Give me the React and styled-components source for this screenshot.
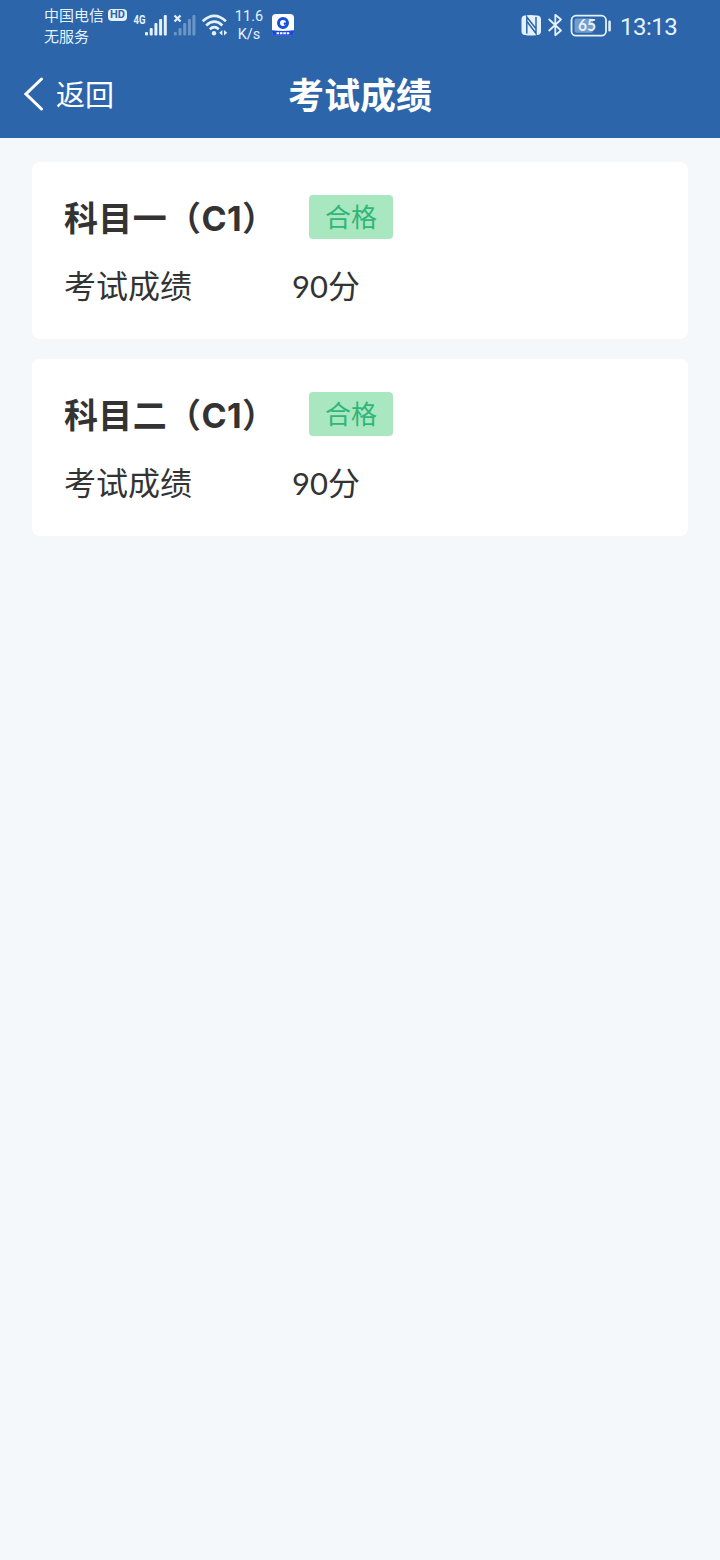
import React from 'react';
import styled, { createGlobalStyle } from 'styled-components';

const GlobalStyle = createGlobalStyle`
  * {
    box-sizing: border-box;
  }

  body {
    margin: 0;
    background-color: #f4f8fa;
    font-family: Lato, 'Noto Sans CJK SC', sans-serif;
    color: #333;
  }
`;

const Page = styled.div`
  width: 720px;
  min-height: 1560px;
  background-color: #f4f8fa;
`;

const Header = styled.header`
  height: 138px;
  background-color: #2c65aa;
  color: #fff;
`;

const StatusBar = styled.div`
  display: flex;
  justify-content: space-between;
  height: 50px;
  padding: 0 43px 0 44px;
  color: #e4f1ff;
`;

const StatusGroup = styled.div`
  display: flex;
  align-items: flex-start;
`;

const Carrier = styled.div`
  width: 86px;
  padding-top: 4px;
  font-family: 'Noto Sans CJK SC', sans-serif;
  font-size: 15px;
  line-height: 21px;
  white-space: nowrap;
`;

const CarrierLine = styled.div`
  display: flex;
  align-items: center;
  gap: 4px;
`;

const HdBadge = styled.span`
  flex: none;
  width: 19px;
  height: 12px;
  margin-top: 1px;
  border-radius: 4px;
  background-color: #e4f1ff;
  color: #2c65aa;
  font-family: Roboto, sans-serif;
  font-size: 11px;
  font-weight: 700;
  line-height: 12px;
  text-align: center;
`;

const NetSpeed = styled.div`
  width: 30px;
  margin-left: 4px;
  padding-top: 8px;
  font-family: Roboto, sans-serif;
  font-size: 14.5px;
  line-height: 18px;
  text-align: center;
`;

const StatusIcon = styled.svg`
  flex: none;
  display: block;
  margin-left: ${(props) => props.$left || 0}px;
`;

const Clock = styled.div`
  width: 57px;
  margin-left: 9px;
  padding-top: 12px;
  font-family: Roboto, sans-serif;
  font-size: 24px;
  line-height: 31px;
  letter-spacing: -0.5px;
  white-space: nowrap;
`;

const NavBar = styled.div`
  display: grid;
  grid-template-columns: 1fr auto 1fr;
  align-items: center;
  height: 88px;
  padding: 0 24px 2px;
  font-family: 'Noto Sans CJK SC', sans-serif;
`;

const BackButton = styled.button`
  display: flex;
  align-items: center;
  gap: 12px;
  padding: 0;
  border: none;
  background: none;
  color: inherit;
  font-family: inherit;
  font-size: 29px;
  line-height: 44px;
`;

const BackArrow = styled.svg`
  margin-top: 2px;
`;

const NavTitle = styled.h1`
  margin: 0;
  font-size: 36px;
  font-weight: 700;
  line-height: 50px;
`;

const CardList = styled.main`
  display: flex;
  flex-direction: column;
  gap: 20px;
  padding: 24px 32px;
`;

const Card = styled.section`
  height: 177px;
  padding: 33px 32px;
  border-radius: 8px;
  background-color: #fff;
`;

const CardHead = styled.div`
  display: flex;
  align-items: center;
  height: 44px;
`;

const SubjectName = styled.h2`
  width: 213px;
  margin: 0 32px 0 0;
  padding-top: 4px;
  font-family: Inter, 'Noto Sans CJK SC', sans-serif;
  font-size: 34px;
  font-weight: 700;
  line-height: 44px;
  letter-spacing: 0.35px;
  white-space: nowrap;
`;

const ResultTag = styled.span`
  width: 84px;
  height: 44px;
  border-radius: 4px;
  background-color: #a9e7c0;
  color: #2fb678;
  font-size: 26px;
  line-height: 45px;
  text-align: center;
`;

const ScoreRow = styled.div`
  display: grid;
  grid-template-columns: 228px 1fr;
  margin-top: 24px;
  font-size: 32px;
  line-height: 46px;
`;

const ScoreNumber = styled.span`
  font-size: 31px;
`;

const results = [
  { id: 1, subject: '科目一（C1）', status: '合格', score: 90 },
  { id: 2, subject: '科目二（C1）', status: '合格', score: 90 },
];

function SignalIcons() {
  return (
    <StatusIcon width="100" height="50" viewBox="130 0 100 50" fill="#e4f1ff">
      <text x="133.5" y="24" fontFamily="Roboto" fontSize="12" fontWeight="700" textLength="12" lengthAdjust="spacingAndGlyphs">4G</text>
      <g>
        <rect x="145" y="32" width="3" height="3.5" rx="1" />
        <rect x="149.7" y="28" width="3" height="7.5" rx="1" />
        <rect x="154.4" y="23" width="3" height="12.5" rx="1" />
        <rect x="159.1" y="19" width="3" height="16.5" rx="1" />
        <rect x="163.8" y="15" width="3" height="20.5" rx="1" />
      </g>
      <g opacity="0.35">
        <rect x="173.8" y="32" width="3" height="3.5" rx="1" />
        <rect x="178.5" y="28" width="3" height="7.5" rx="1" />
        <rect x="183.2" y="23" width="3" height="12.5" rx="1" />
        <rect x="187.9" y="19" width="3" height="16.5" rx="1" />
        <rect x="192.4" y="15" width="3" height="20.5" rx="1" />
      </g>
      <path d="M174.5 15.5l6 6M180.5 15.5l-6 6" stroke="#e4f1ff" strokeWidth="2.2" />
      <g fill="none" stroke="#e4f1ff" strokeWidth="2.7">
        <path d="M202.7 21.2Q214.3 10.5 225.9 21.2" />
        <path d="M206.2 25.4Q214.3 18 222.4 25.4" />
        <path d="M209.8 29.2Q214.3 25.2 218.8 29.2" />
      </g>
      <circle cx="214" cy="33.3" r="2.2" />
      <path d="M222.4 30v5.6l-3.2-2.8zM224 30v5.6l3.2-2.8z" />
    </StatusIcon>
  );
}

function AppNoticeIcon() {
  return (
    <StatusIcon $left={8} width="22" height="50" viewBox="272 0 22 50">
      <rect x="272" y="14" width="22" height="21.5" rx="4" fill="#fff" />
      <path d="M272 30.2q11 1.5 22 0v1.5a4 4 0 0 1-4 4h-14a4 4 0 0 1-4-4z" fill="#1747e0" />
      <circle cx="283" cy="23" r="4.5" fill="#fff" stroke="#1650d8" strokeWidth="3" />
      <path d="M283.5 23.5l1.5-1.5 1.5 1.5-2 2z" fill="#1650d8" />
      <path d="M276.5 33.2h13" stroke="#fff" strokeWidth="2" strokeDasharray="2.6 .8" />
    </StatusIcon>
  );
}

function DeviceIcons() {
  return (
    <StatusIcon width="92" height="50" viewBox="519 0 92 50">
      <path d="M525 15.5q5-1 12 0 4 .2 4 4v11.5q0 3.8-4 4-6 1-12 0-3.5-.2-3.5-4V19.5q0-3.8 3.5-4z" fill="#e4f1ff" />
      <g fill="none" stroke="#2c65aa" strokeWidth="1.5">
        <path d="M526.8 33.5V17l9 11.5" />
        <path d="M527 21.5l9 12V17" />
      </g>
      <path
        d="M549.2 19.5L561 30.5L555.3 35.2V14.8L561 19.5L549.2 30.5"
        fill="none"
        stroke="#e4f1ff"
        strokeWidth="1.8"
        strokeLinejoin="round"
        strokeLinecap="round"
      />
      <rect x="571.5" y="15.7" width="34.5" height="20" rx="4.5" fill="none" stroke="#e4f1ff" strokeWidth="1.8" />
      <rect x="574.5" y="18.6" width="18.5" height="14.2" rx="2" fill="#e4f1ff" opacity="0.4" />
      <rect x="608.3" y="20.5" width="2.5" height="11" rx="1.2" fill="#e4f1ff" />
      <text x="578" y="31" fill="#e4f1ff" fontFamily="Lato" fontSize="17.5" fontWeight="700" textLength="18" lengthAdjust="spacingAndGlyphs">65</text>
    </StatusIcon>
  );
}

function ResultCard({ result }) {
  return (
    <Card>
      <CardHead>
        <SubjectName>{result.subject}</SubjectName>
        <ResultTag>{result.status}</ResultTag>
      </CardHead>
      <ScoreRow>
        <span>考试成绩</span>
        <span><ScoreNumber>{result.score}</ScoreNumber>分</span>
      </ScoreRow>
    </Card>
  );
}

function App() {
  return (
    <Page>
      <GlobalStyle />
      <Header>
        <StatusBar>
          <StatusGroup>
            <Carrier>
              <CarrierLine>中国电信<HdBadge>HD</HdBadge></CarrierLine>
              <CarrierLine>无服务</CarrierLine>
            </Carrier>
            <SignalIcons />
            <NetSpeed>11.6<br />K/s</NetSpeed>
            <AppNoticeIcon />
          </StatusGroup>
          <StatusGroup>
            <DeviceIcons />
            <Clock>13:13</Clock>
          </StatusGroup>
        </StatusBar>
        <NavBar>
          <BackButton>
            <BackArrow width="20" height="34" viewBox="0 0 20 34" fill="none" stroke="#fff" strokeWidth="3" strokeLinecap="round">
              <path d="M17.5 2L2 17l15.500 15" />
            </BackArrow>
            返回
          </BackButton>
          <NavTitle>考试成绩</NavTitle>
        </NavBar>
      </Header>
      <CardList>
        {results.map((result) => (
          <ResultCard key={result.id} result={result} />
        ))}
      </CardList>
    </Page>
  );
}

export default App;
